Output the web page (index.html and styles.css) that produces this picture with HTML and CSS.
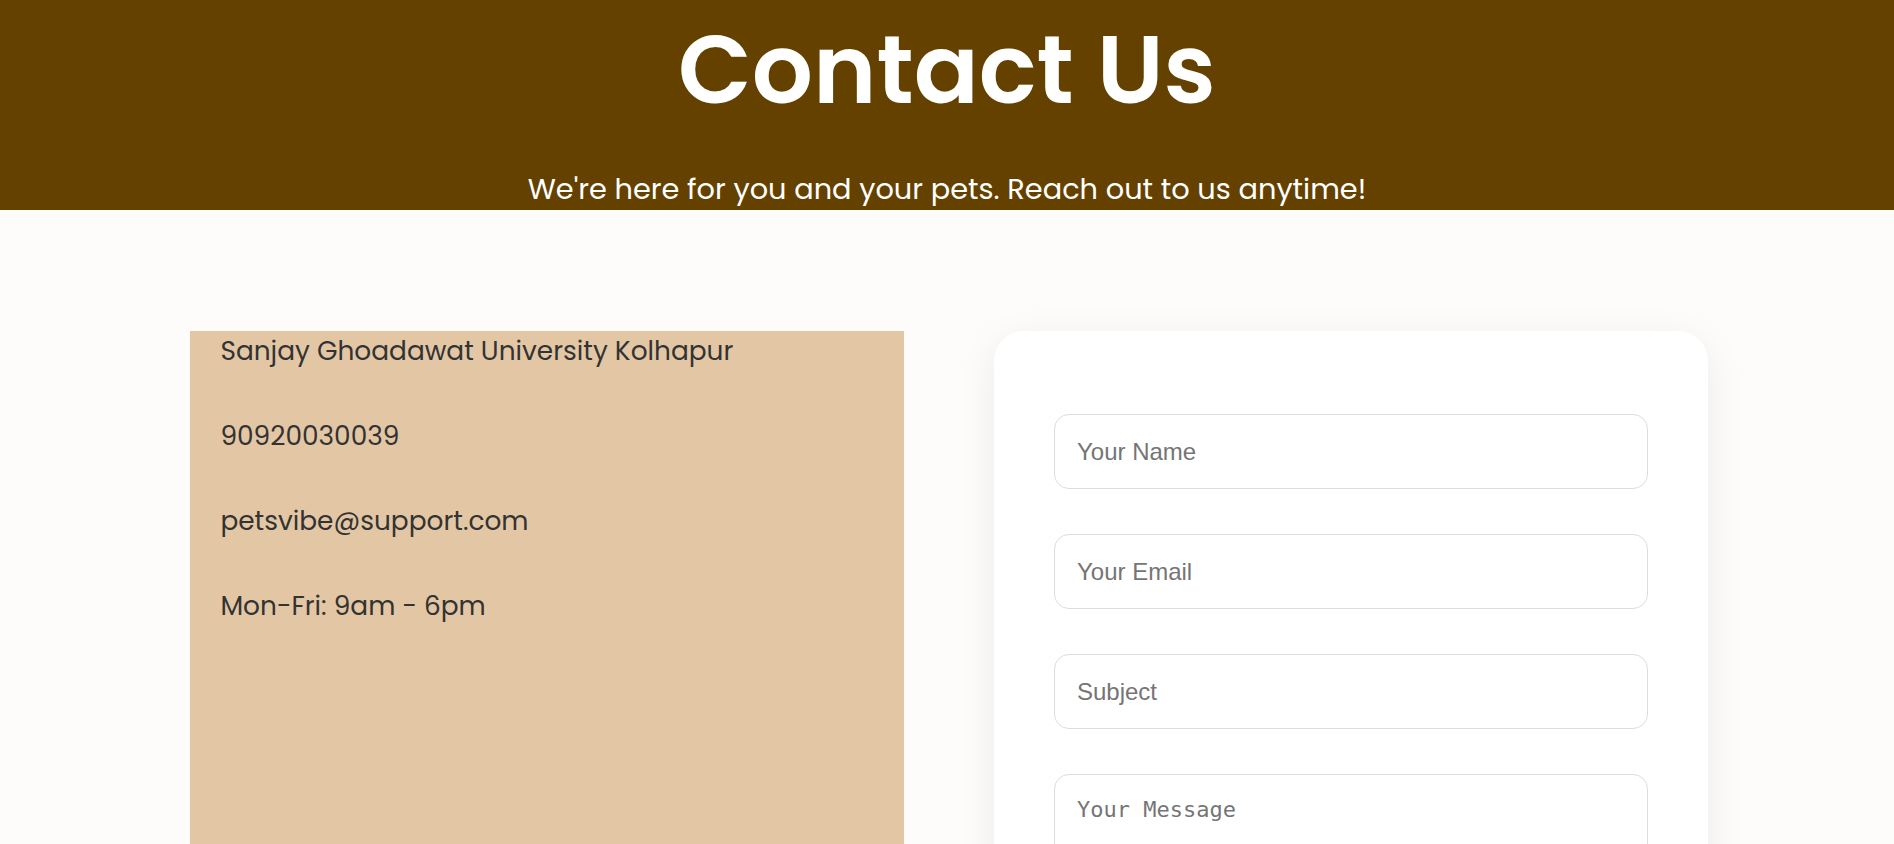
FILE: index.html
```html
<!DOCTYPE html>
<html lang="en">
<head>
<meta charset="utf-8">
<title>Contact Us</title>
<link rel="stylesheet" href="styles.css">
</head>
<body>
<header class="hero">
  <h1 class="hero-title">Contact Us</h1>
  <p class="hero-sub">We're here for you and your pets. Reach out to us anytime!</p>
</header>
<main class="contact">
  <section class="info">
    <p class="info-line">Sanjay Ghoadawat University Kolhapur</p>
    <p class="info-line">90920030039</p>
    <p class="info-line">petsvibe@support.com</p>
    <p class="info-line">Mon-Fri: 9am - 6pm</p>
  </section>
  <section class="card">
    <form class="form">
      <input class="field" type="text" placeholder="Your Name">
      <input class="field" type="email" placeholder="Your Email">
      <input class="field" type="text" placeholder="Subject">
      <textarea class="field field-area" placeholder="Your Message"></textarea>
    </form>
  </section>
</main>
</body>
</html>
```
FILE: styles.css
```css
* { box-sizing: border-box; }
body {
  margin: 0;
  background: #fdfcfa;
  font-family: "Poppins", "Open Sans", sans-serif;
  color: #333;
}
.hero {
  height: 210px;
  overflow: hidden;
  background: #654100;
  color: #fff;
  text-align: center;
  padding-top: 22px;
}
.hero-title {
  margin: 0;
  font-size: 96px;
  line-height: 95px;
  font-weight: 600;
}
.hero-sub {
  margin: 58px 0 0;
  font-size: 28.8px;
  line-height: 28px;
}
.contact {
  width: calc(80% + 2px);
  margin: 0 0 0 calc(10% + 1px);
  padding-top: 121px;
  display: grid;
  grid-template-columns: 1fr 1fr;
  gap: 90px;
}
.info {
  background: #e3c7a5;
  padding: 0 30px;
  display: flex;
  flex-direction: column;
  gap: 45px;
}
.info-line {
  margin: 0;
  font-size: 26.4px;
  line-height: 40px;
  color: #333;
}
.card {
  background: #fff;
  border-radius: 30px;
  box-shadow: 0 10px 40px rgba(0, 0, 0, 0.07);
  padding: 83px 60px 60px;
}
.form {
  display: flex;
  flex-direction: column;
  gap: 45px;
}
.field {
  width: 100%;
  height: 75px;
  padding: 0 22px;
  border: 1px solid #ddd;
  border-radius: 15px;
  background: #fff;
  font-family: "Liberation Sans", Arial, sans-serif;
  font-size: 24px;
  color: #333;
  outline: none;
}
.field::placeholder { color: #757575; }
.field-area {
  height: 200px;
  padding: 22px;
  font-family: "DejaVu Sans Mono", monospace;
  font-size: 22px;
  resize: vertical;
}
```
